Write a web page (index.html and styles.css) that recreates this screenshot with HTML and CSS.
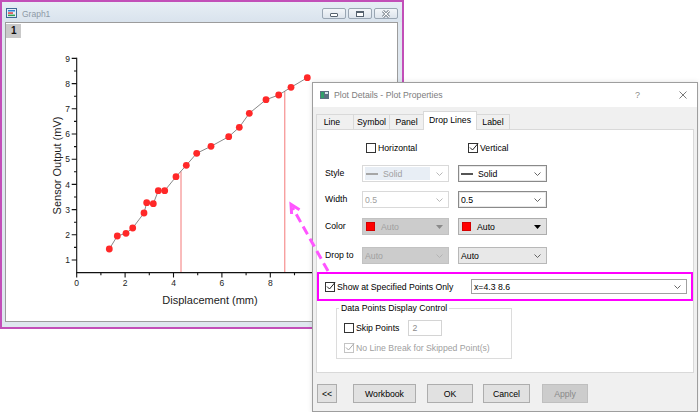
FILE: index.html
```html
<!DOCTYPE html>
<html>
<head>
    <title>Plot Details - Plot Properties</title>
    <link rel="stylesheet" href="styles.css">
</head>
<body>
    <div class="desktop">
        <div class="graph-window">
            <div class="graph-titlebar">
                <svg class="graph-icon" width="11" height="10" viewBox="0 0 11 10">
                    <rect x="0.5" y="0.5" width="10" height="9" fill="#e6eef6" stroke="#3f6a96"/>
                    <rect x="2" y="2" width="7" height="1.5" fill="#2a86d6"/>
                    <rect x="2" y="4.3" width="5" height="1.5" fill="#e04040"/>
                    <rect x="2" y="6.6" width="7" height="1.5" fill="#2f9e50"/>
                </svg>
                <span class="graph-name">Graph1</span>
                <div class="window-buttons">
                    <span class="window-button">
                        <svg width="10" height="8" viewBox="0 0 10 8"><rect x="1.5" y="3.5" width="7" height="3" rx="0.5" fill="#fff" stroke="#56626e"/></svg>
                    </span>
                    <span class="window-button">
                        <svg width="10" height="8" viewBox="0 0 10 8"><rect x="1.5" y="1.5" width="7" height="5" fill="#fff" stroke="#56626e"/><rect x="1.5" y="1.5" width="7" height="1.5" fill="#56626e"/></svg>
                    </span>
                    <span class="window-button">
                        <svg width="10" height="8" viewBox="0 0 10 8"><path d="M2 1 L8 7 M8 1 L2 7" stroke="#56626e" stroke-width="2.6"/><path d="M2 1 L8 7 M8 1 L2 7" stroke="#fff" stroke-width="1.1"/></svg>
                    </span>
                </div>
            </div>
            <div class="graph-client">
                <span class="layer-tab">1</span>
                <svg class="plot" width="391" height="298" viewBox="6 23 391 298">
                    <path class="drop-line" d="M181 171.5 V272.6 M284.8 91.4 V272.6"/>
                    <polyline class="data-line" points="109.3,249 117.3,236 126,233.3 132.7,228 144,213 146.7,202.7 153.3,203.7 158.3,190.7 164.7,190.7 176,176.7 186.3,165.3 196.7,153.3 211,146.3 228.7,136.7 239.3,127.3 249.3,113.3 266,99.7 278.7,95 291,87.3 307.3,77.7"/>
                    <g class="points">
                        <circle cx="109.3" cy="249" r="3.4"/>
                        <circle cx="117.3" cy="236" r="3.4"/>
                        <circle cx="126" cy="233.3" r="3.4"/>
                        <circle cx="132.7" cy="228" r="3.4"/>
                        <circle cx="144" cy="213" r="3.4"/>
                        <circle cx="146.7" cy="202.7" r="3.4"/>
                        <circle cx="153.3" cy="203.7" r="3.4"/>
                        <circle cx="158.3" cy="190.7" r="3.4"/>
                        <circle cx="164.7" cy="190.7" r="3.4"/>
                        <circle cx="176" cy="176.7" r="3.4"/>
                        <circle cx="186.3" cy="165.3" r="3.4"/>
                        <circle cx="196.7" cy="153.3" r="3.4"/>
                        <circle cx="211" cy="146.3" r="3.4"/>
                        <circle cx="228.7" cy="136.7" r="3.4"/>
                        <circle cx="239.3" cy="127.3" r="3.4"/>
                        <circle cx="249.3" cy="113.3" r="3.4"/>
                        <circle cx="266" cy="99.7" r="3.4"/>
                        <circle cx="278.7" cy="95" r="3.4"/>
                        <circle cx="291" cy="87.3" r="3.4"/>
                        <circle cx="307.3" cy="77.7" r="3.4"/>
                    </g>
                    <path class="axis" d="M76.7 57.8 V273.2 M76.1 272.6 H340"/>
                    <path class="axis-tick" d="M71.7 260H76.7 M71.7 234.8H76.7 M71.7 209.6H76.7 M71.7 184.4H76.7 M71.7 159.2H76.7 M71.7 134H76.7 M71.7 108.8H76.7 M71.7 83.6H76.7 M71.7 58.4H76.7
                        M74 247.4H76.7 M74 222.2H76.7 M74 197H76.7 M74 171.8H76.7 M74 146.6H76.7 M74 121.4H76.7 M74 96.2H76.7 M74 71H76.7
                        M76.7 272.6V277.4 M125.1 272.6V277.4 M173.5 272.6V277.4 M221.9 272.6V277.4 M270.3 272.6V277.4 M318.7 272.6V277.4
                        M100.9 272.6V275.2 M149.3 272.6V275.2 M197.7 272.6V275.2 M246.1 272.6V275.2 M294.5 272.6V275.2"/>
                    <g class="tick-label y-labels">
                        <text x="70" y="263.1">1</text>
                        <text x="70" y="237.9">2</text>
                        <text x="70" y="212.7">3</text>
                        <text x="70" y="187.5">4</text>
                        <text x="70" y="162.3">5</text>
                        <text x="70" y="137.1">6</text>
                        <text x="70" y="111.9">7</text>
                        <text x="70" y="86.7">8</text>
                        <text x="70" y="61.5">9</text>
                    </g>
                    <g class="tick-label x-labels">
                        <text x="76.7" y="286">0</text>
                        <text x="125.1" y="286">2</text>
                        <text x="173.5" y="286">4</text>
                        <text x="221.9" y="286">6</text>
                        <text x="270.3" y="286">8</text>
                    </g>
                    <text class="axis-title" x="210" y="303.5">Displacement (mm)</text>
                    <text class="axis-title" transform="translate(60.5 165.5) rotate(-90)">Sensor Output (mV)</text>
                </svg>
            </div>
        </div>

        <div class="dialog">
            <div class="dialog-titlebar">
                <svg class="dialog-icon" width="9" height="8" viewBox="0 0 9 8">
                    <rect x="0" y="0" width="9" height="8" fill="#5b6f82"/>
                    <rect x="1" y="1" width="3" height="6" fill="#2f9e6a"/>
                    <rect x="5" y="1" width="3" height="2" fill="#d8e4ee"/>
                </svg>
                <span class="dialog-caption">Plot Details - Plot Properties</span>
                <span class="dialog-help">?</span>
                <svg class="dialog-close" width="8" height="8" viewBox="0 0 8 8"><path d="M0.5 0.5 L7.5 7.5 M7.5 0.5 L0.5 7.5" stroke="#6b6b6b" stroke-width="0.9"/></svg>
            </div>
            <div class="dialog-body">
                <div class="tabs">
                    <span class="tab tab-line">Line</span>
                    <span class="tab tab-symbol">Symbol</span>
                    <span class="tab tab-panel-name">Panel</span>
                    <span class="tab tab-drop is-active">Drop Lines</span>
                    <span class="tab tab-label">Label</span>
                </div>
                <div class="tab-page">
                    <div class="form-grid">
                        <span></span>
                        <label class="check-item check-horizontal"><span class="check"></span>Horizontal</label>
                        <label class="check-item check-vertical"><span class="check"><svg class="tick" width="11" height="11" viewBox="0 0 11 11"><path d="M2 5.5 L4.5 8 L10 1.5"/></svg></span>Vertical</label>

                        <span class="field-label">Style</span>
                        <div class="combo is-disabled">
                            <span class="combo-selected"><span class="line-swatch"></span>Solid</span>
                            <svg class="chevron" width="7" height="4" viewBox="0 0 7 4"><path d="M0.5 0.5 L3.5 3.5 L6.5 0.5"/></svg>
                        </div>
                        <div class="combo is-framed">
                            <span class="combo-text"><span class="line-swatch"></span>Solid</span>
                            <svg class="chevron" width="7" height="4" viewBox="0 0 7 4"><path d="M0.5 0.5 L3.5 3.5 L6.5 0.5"/></svg>
                        </div>

                        <span class="field-label">Width</span>
                        <div class="combo is-disabled">
                            <span class="combo-text">0.5</span>
                            <svg class="chevron" width="7" height="4" viewBox="0 0 7 4"><path d="M0.5 0.5 L3.5 3.5 L6.5 0.5"/></svg>
                        </div>
                        <div class="combo is-framed">
                            <span class="combo-text">0.5</span>
                            <svg class="chevron" width="7" height="4" viewBox="0 0 7 4"><path d="M0.5 0.5 L3.5 3.5 L6.5 0.5"/></svg>
                        </div>

                        <span class="field-label">Color</span>
                        <div class="combo is-button is-disabled">
                            <span class="combo-text"><span class="color-swatch"></span>Auto</span>
                            <svg class="caret" width="7" height="4" viewBox="0 0 7 4"><path d="M0 0 H7 L3.5 4 Z"/></svg>
                        </div>
                        <div class="combo is-button">
                            <span class="combo-text"><span class="color-swatch"></span>Auto</span>
                            <svg class="caret" width="7" height="4" viewBox="0 0 7 4"><path d="M0 0 H7 L3.5 4 Z"/></svg>
                        </div>

                        <span class="field-label">Drop to</span>
                        <div class="combo is-button is-disabled">
                            <span class="combo-text">Auto</span>
                            <svg class="chevron" width="7" height="4" viewBox="0 0 7 4"><path d="M0.5 0.5 L3.5 3.5 L6.5 0.5"/></svg>
                        </div>
                        <div class="combo is-soft">
                            <span class="combo-text">Auto</span>
                            <svg class="chevron" width="7" height="4" viewBox="0 0 7 4"><path d="M0.5 0.5 L3.5 3.5 L6.5 0.5"/></svg>
                        </div>
                    </div>

                    <div class="spec-row">
                        <label class="check-item"><span class="check"><svg class="tick" width="11" height="11" viewBox="0 0 11 11"><path d="M2 5.5 L4.5 8 L10 1.5"/></svg></span>Show at Specified Points Only</label>
                        <div class="combo spec-combo">
                            <span class="combo-text">x=4.3 8.6</span>
                            <svg class="chevron" width="7" height="4" viewBox="0 0 7 4"><path d="M0.5 0.5 L3.5 3.5 L6.5 0.5"/></svg>
                        </div>
                    </div>

                    <fieldset class="group-box">
                        <legend>Data Points Display Control</legend>
                        <div class="group-row">
                            <label class="check-item"><span class="check"></span>Skip Points</label>
                            <span class="text-box">2</span>
                        </div>
                        <label class="check-item is-disabled"><span class="check"><svg class="tick" width="11" height="11" viewBox="0 0 11 11"><path d="M2 5.5 L4.5 8 L10 1.5"/></svg></span>No Line Break for Skipped Point(s)</label>
                    </fieldset>
                </div>
                <div class="button-row">
                    <button class="dialog-button btn-back">&lt;&lt;</button>
                    <button class="dialog-button btn-workbook">Workbook</button>
                    <button class="dialog-button btn-ok">OK</button>
                    <button class="dialog-button btn-cancel">Cancel</button>
                    <button class="dialog-button btn-apply" disabled>Apply</button>
                </div>
            </div>
        </div>

        <svg class="pointer-arrow" width="700" height="412" viewBox="0 0 700 412">
            <path class="arrow-shaft" d="M328 271 L292.5 207.5"/>
            <path class="arrow-head" d="M299.5 209.8 L291 204.3 L291.6 214"/>
        </svg>
    </div>
</body>
</html>
```

FILE: styles.css
```css
body {
    margin: 0;
    background-color: #fff;
    font-family: "Liberation Sans", Arial, sans-serif;
}
.desktop {
    position: relative;
    width: 700px;
    height: 412px;
    overflow: hidden;
}

/* graph window */
.graph-window {
    position: absolute;
    left: 0;
    top: 0;
    width: 404px;
    height: 329px;
    box-sizing: border-box;
    border: 2px solid #c24fb8;
    background-color: #dfe7ef;
    display: flex;
    flex-direction: column;
}
.graph-titlebar {
    height: 20px;
    box-sizing: border-box;
    display: flex;
    align-items: flex-start;
    padding: 6px 4px 0 4px;
    background: linear-gradient(#e7eef5, #d9e3ed);
}
.graph-icon {
    display: block;
}
.graph-name {
    margin-left: 5px;
    margin-top: 1px;
    font-size: 8.5px;
    line-height: 10px;
    color: #8d99a6;
}
.window-buttons {
    margin-left: auto;
    display: flex;
    gap: 2px;
}
.window-button {
    width: 24px;
    height: 11px;
    box-sizing: border-box;
    border: 1px solid #9aa6b3;
    border-radius: 2px;
    background: linear-gradient(#f3f6f9, #dde4ec);
    display: flex;
    align-items: center;
    justify-content: center;
}
.window-button svg {
    display: block;
}
.graph-client {
    position: relative;
    flex: 1;
    margin: 0 4px 5px 3px;
    border: 1px solid #9c9c9c;
    background-color: #fff;
    overflow: hidden;
}
.layer-tab {
    position: absolute;
    left: 0;
    top: 1px;
    width: 15px;
    height: 14px;
    box-sizing: border-box;
    padding-left: 5px;
    background-color: #c9c9c9;
    font-size: 10px;
    font-weight: bold;
    line-height: 14px;
    color: #111;
}
.plot {
    display: block;
}
.drop-line {
    stroke: #f47878;
    stroke-width: 1;
    fill: none;
}
.data-line {
    fill: none;
    stroke: #555;
    stroke-width: 0.7;
}
.points circle {
    fill: #ff2828;
}
.axis, .axis-tick {
    fill: none;
    stroke: #111;
    stroke-width: 1.1;
}
.tick-label {
    font-family: "Liberation Sans", Arial, sans-serif;
    font-size: 8.5px;
    fill: #222;
}
.y-labels {
    text-anchor: end;
}
.x-labels {
    text-anchor: middle;
}
.axis-title {
    font-family: "Liberation Sans", Arial, sans-serif;
    font-size: 11px;
    fill: #222;
    text-anchor: middle;
}

/* dialog */
.dialog {
    position: absolute;
    left: 312px;
    top: 82px;
    width: 386px;
    height: 330px;
    box-sizing: border-box;
    border: 1px solid #9e9e9e;
    background-color: #f0f0f0;
    box-shadow: 0 0 5px rgba(0,0,0,0.12);
    font-size: 8.7px;
    color: #000;
}
.dialog-titlebar {
    height: 24px;
    display: flex;
    align-items: center;
    padding: 0 10px 0 7px;
    background-color: #fff;
}
.dialog-icon {
    display: block;
}
.dialog-caption {
    margin-left: 5px;
    color: #7d7d7d;
}
.dialog-help {
    margin-left: auto;
    margin-right: 39px;
    color: #8a8a8a;
    font-size: 9px;
}
.dialog-close {
    display: block;
}
.dialog-body {
    padding: 4px 3px 0 3px;
}
.tabs {
    display: flex;
    align-items: flex-end;
    height: 19px;
    margin-bottom: -1px;
    position: relative;
}
.tab {
    height: 15px;
    box-sizing: border-box;
    margin-bottom: 1px;
    margin-right: -1px;
    border: 1px solid #d9d9d9;
    border-bottom: none;
    background-color: #f0f0f0;
    line-height: 14px;
    text-align: center;
    white-space: nowrap;
}
.tab.is-active {
    height: 19px;
    margin-bottom: 0;
    background-color: #fff;
    line-height: 16px;
    position: relative;
    z-index: 1;
}
.tab-line { width: 38px; padding-right: 6px; box-sizing: border-box; }
.tab-symbol { width: 37px; }
.tab-panel-name { width: 35px; }
.tab-drop { width: 54px; }
.tab-label { width: 34px; }

.tab-page {
    height: 244px;
    box-sizing: border-box;
    border: 1px solid #d9d9d9;
    background-color: #fff;
}

.form-grid {
    display: grid;
    grid-template-columns: 28px 87px 89px;
    grid-template-rows: 22px 26px 27px 29px 18px;
    column-gap: 9px;
    align-items: start;
    margin: 13px 0 0 8px;
}
.field-label {
    height: 17px;
    line-height: 17px;
    white-space: nowrap;
}
.check-item {
    display: flex;
    align-items: center;
    gap: 2px;
    height: 10px;
    white-space: nowrap;
}
.check-horizontal {
    padding-left: 4px;
}
.check-vertical {
    padding-left: 10px;
}
.check {
    position: relative;
    width: 10px;
    height: 10px;
    box-sizing: border-box;
    border: 1px solid #333;
    background-color: #fff;
    flex-shrink: 0;
}
.check .tick {
    position: absolute;
    left: -1px;
    top: -2px;
}
.tick path {
    fill: none;
    stroke: #222;
    stroke-width: 1;
}
.check-item.is-disabled {
    color: #a0a0a0;
}
.check-item.is-disabled .check {
    border-color: #c4c4c4;
}
.check-item.is-disabled .tick path {
    stroke: #a8a8a8;
}

.combo {
    height: 17px;
    box-sizing: border-box;
    display: flex;
    align-items: center;
    padding: 0 5px 0 2px;
    border: 1px solid #7a7a7a;
    background-color: #fff;
}
.combo.is-framed {
    border: 1px solid #8a8a8a;
    box-shadow: inset 0 0 0 1px #e8e8e8;
}
.combo.is-disabled {
    border-color: #d9d9d9;
    color: #a0a0a0;
}
.combo.is-button {
    background-color: #e1e1e1;
    border-color: #adadad;
}
.combo.is-button.is-disabled {
    background-color: #cccccc;
    border-color: #c2c2c2;
}
.combo.is-soft {
    background-color: #e8e8e8;
    border-color: #b8b8b8;
}
.combo-text, .combo-selected {
    display: flex;
    align-items: center;
    flex: 1;
    white-space: nowrap;
}
.combo-selected {
    align-self: stretch;
    margin: 1px 6px 1px 0;
    padding-left: 1px;
    background-color: #e8eef5;
}
.line-swatch {
    width: 12px;
    height: 2px;
    margin-right: 5px;
    background-color: #555;
}
.combo.is-disabled .line-swatch {
    background-color: #a6a6a6;
}
.color-swatch {
    width: 9px;
    height: 9px;
    box-sizing: border-box;
    margin: 0 6px 0 1px;
    border: 1px solid #d40000;
    background-color: #ff0000;
}
.chevron path {
    fill: none;
    stroke: #555;
    stroke-width: 0.9;
}
.combo.is-disabled .chevron path {
    stroke: #b0b0b0;
}
.caret path {
    fill: #000;
}
.combo.is-disabled .caret path {
    fill: #8a8a8a;
}

.spec-row {
    height: 29px;
    box-sizing: border-box;
    margin-top: 7px;
    padding: 0 4px 0 6px;
    border: 2px solid #ff00ff;
    display: flex;
    align-items: center;
    justify-content: space-between;
}
.spec-combo {
    width: 216px;
    height: 15px;
    border-color: #a0a0a0;
}

.group-box {
    width: 176px;
    box-sizing: border-box;
    margin: 2px 0 0 19px;
    padding: 7px 0 5px 7px;
    border: 1px solid #dcdcdc;
}
.group-box legend {
    margin-left: -5px;
    padding: 0 2px;
    line-height: 10px;
}
.group-row {
    display: flex;
    align-items: center;
    height: 16px;
    margin-bottom: 7px;
}
.text-box {
    width: 34px;
    height: 16px;
    box-sizing: border-box;
    margin-left: 9px;
    padding-left: 3px;
    border: 1px solid #d4d4d4;
    color: #8c8c8c;
    line-height: 14px;
}

.button-row {
    display: flex;
    margin-top: 11px;
    padding-left: 1px;
}
.dialog-button {
    height: 19px;
    box-sizing: border-box;
    padding: 0;
    border: 1px solid #adadad;
    background-color: #e1e1e1;
    font-family: "Liberation Sans", Arial, sans-serif;
    font-size: 8.7px;
    color: #000;
}
.btn-back { width: 20px; }
.btn-workbook { width: 63px; margin-left: 16px; }
.btn-ok { width: 46px; margin-left: 11px; }
.btn-cancel { width: 47px; margin-left: 10px; }
.btn-apply {
    width: 46px;
    margin-left: 12px;
    background-color: #cccccc;
    border-color: #bfbfbf;
    color: #8a8a8a;
}

/* dashed pointer on top of both windows */
.pointer-arrow {
    position: absolute;
    left: 0;
    top: 0;
    pointer-events: none;
}
.arrow-shaft {
    fill: none;
    stroke: #ff55ff;
    stroke-width: 3;
    stroke-dasharray: 9 5;
}
.arrow-head {
    fill: none;
    stroke: #ff55ff;
    stroke-width: 3;
}
```
